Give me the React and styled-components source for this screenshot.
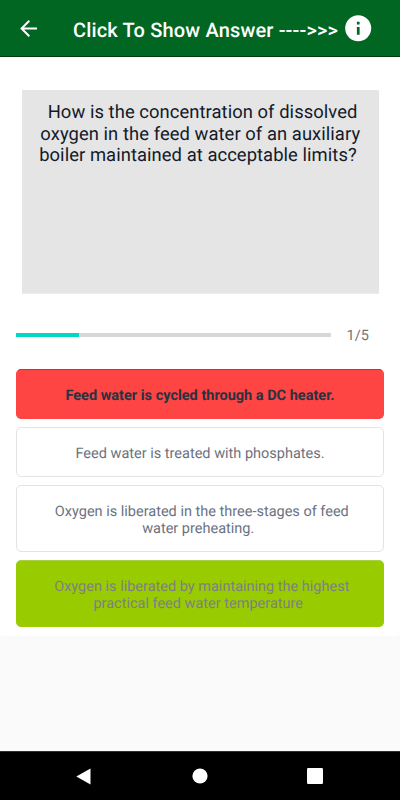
import React from 'react';
import styled, { createGlobalStyle } from "styled-components"


const GlobalStyle = createGlobalStyle`
  * {
    box-sizing: border-box;
  }

  body {
    margin: 0;
    background-color: #fafafa;
    font-family: Roboto, "Liberation Sans", sans-serif;
    text-rendering: geometricPrecision;
  }
`

const Screen = styled.div`
  display: flex;
  flex-direction: column;
  width: 400px;
  height: 800px;
  background-color: #fafafa;
`

const Header = styled.header`
  display: flex;
  align-items: center;
  height: 57px;
  padding-left: 20px;
  background-color: #006622;
  border-bottom: 1px solid #003a08;
`

const Title = styled.h1`
  margin: 3px 0 0 35px;
  width: 266px;
  font-size: 20px;
  font-weight: 500;
  line-height: 24px;
  letter-spacing: 0.16px;
  color: white;
  white-space: nowrap;
`

const InfoIcon = styled.svg`
  margin-left: 6px;
`

const Card = styled.main`
  height: 579px;
  padding: 33px 16px 0;
  background-color: white;
  border-radius: 0 0 4px 4px;
`

const Question = styled.div`
  height: 204px;
  margin: 0 5.5px 0 6px;
  padding-top: 12px;
  background-color: #e5e5e5;
  border-bottom: 1px solid #ececec;
  color: #141a2a;
  font-size: 18.4px;
  line-height: 21.5px;
  text-align: center;
`

const Line = styled.div`
  white-space: pre;
  letter-spacing: ${({$spacing}) => $spacing || 0}px;
`

const Progress = styled.div`
  display: flex;
  align-items: center;
  height: 20px;
  margin-top: 31px;
`

const Track = styled.div`
  width: 315px;
  height: 4px;
  background-color: #d8d8d8;
`

const Bar = styled.div`
  height: 4px;
  background-color: #00d8c4;
`

const Count = styled.span`
  margin-left: 15.5px;
  font-size: 14.5px;
  color: #737373;
`

const Answers = styled.div`
  display: flex;
  flex-direction: column;
  gap: 8px;
  margin-top: 24px;
`

const looks = {
  wrong: `
    background-color: #ff4444;
    border-color: #ff4444;
    border-top-color: #ff1a1a;
    color: #263340;
    font-weight: 700;
  `,
  right: `
    background-color: #99cc00;
    border-color: #99cc00;
    border-top-color: #a8d040;
    color: #7d8084;
  `,
  plain: `
    background-color: white;
    border-color: #e3e3e6;
    color: #6b7280;
  `,
}

const Answer = styled.button`
  display: flex;
  flex-direction: column;
  align-items: center;
  justify-content: center;
  height: ${({$tall}) => $tall ? 67 : 50}px;
  padding: 2px 0 0;
  border: 1px solid;
  border-radius: 5px;
  font-family: inherit;
  font-size: 14.5px;
  line-height: 17px;
  text-rendering: inherit;
  ${({$look}) => looks[$look]}
`

const NavBar = styled.footer`
  display: flex;
  align-items: center;
  height: 49px;
  margin-top: auto;
  background-color: black;
  border-top: 1px solid #303030;
`

const NavIcon = styled.svg`
  flex: none;
  margin-left: ${({$gap}) => $gap}px;
`

const question = [
    " How is the concentration of dissolved",
    "oxygen in the feed water of an auxiliary",
    "boiler maintained at acceptable limits? ",
]

const answers = [
    {look: "wrong", lines: [" Feed water is cycled through a DC heater. "]},
    {look: "plain", lines: [" Feed water is treated with phosphates. "]},
    {look: "plain", lines: [" Oxygen is liberated in the three-stages of feed", "water preheating. "]},
    {look: "right", lines: [" Oxygen is liberated by maintaining the highest", "practical feed water temperature "]},
]

const App = () => {
    const current = 1
    const total = 5

    return (
        <>
            <GlobalStyle/>
            <Screen>
                <Header>
                    <svg width="18" height="18" viewBox="0 0 18 18" fill="none" stroke="white" strokeWidth="2">
                        <path d="M17 9.5H2M9.3 1.8L1.6 9.5L9.3 17.2"/>
                    </svg>
                    <Title>{"Click To Show Answer ---->>>"}</Title>
                    <InfoIcon width="27" height="27" viewBox="0 0 27 27">
                        <circle cx="13.2" cy="13.2" r="13" fill="white"/>
                        <path d="M11.9 6.7h2.7v2.7h-2.7zM11.9 12h2.7v7.8h-2.7z" fill="#006622"/>
                    </InfoIcon>
                </Header>
                <Card>
                    <Question>
                        {question.map((text) => (
                            <Line key={text} $spacing={0.06}>{text}</Line>
                        ))}
                    </Question>
                    <Progress>
                        <Track>
                            <Bar style={{width: `${current / total * 100}%`}}/>
                        </Track>
                        <Count>{current}/{total}</Count>
                    </Progress>
                    <Answers>
                        {answers.map(({look, lines}) => (
                            <Answer key={lines[0]} $look={look} $tall={lines.length > 1}>
                                {lines.map((line) => (
                                    <Line key={line}>{line}</Line>
                                ))}
                            </Answer>
                        ))}
                    </Answers>
                </Card>
                <NavBar>
                    <NavIcon $gap={76} width="15" height="17" viewBox="0 0 15 17">
                        <path d="M14.5 0.5v16L0.3 8.5z" fill="white"/>
                    </NavIcon>
                    <NavIcon $gap={101} width="16" height="16" viewBox="0 0 16 16">
                        <circle cx="8" cy="8" r="7.6" fill="white"/>
                    </NavIcon>
                    <NavIcon $gap={99} width="16" height="16" viewBox="0 0 16 16">
                        <rect width="16" height="16" rx="1.2" fill="white"/>
                    </NavIcon>
                </NavBar>
            </Screen>
        </>
    );
};

export default App;
